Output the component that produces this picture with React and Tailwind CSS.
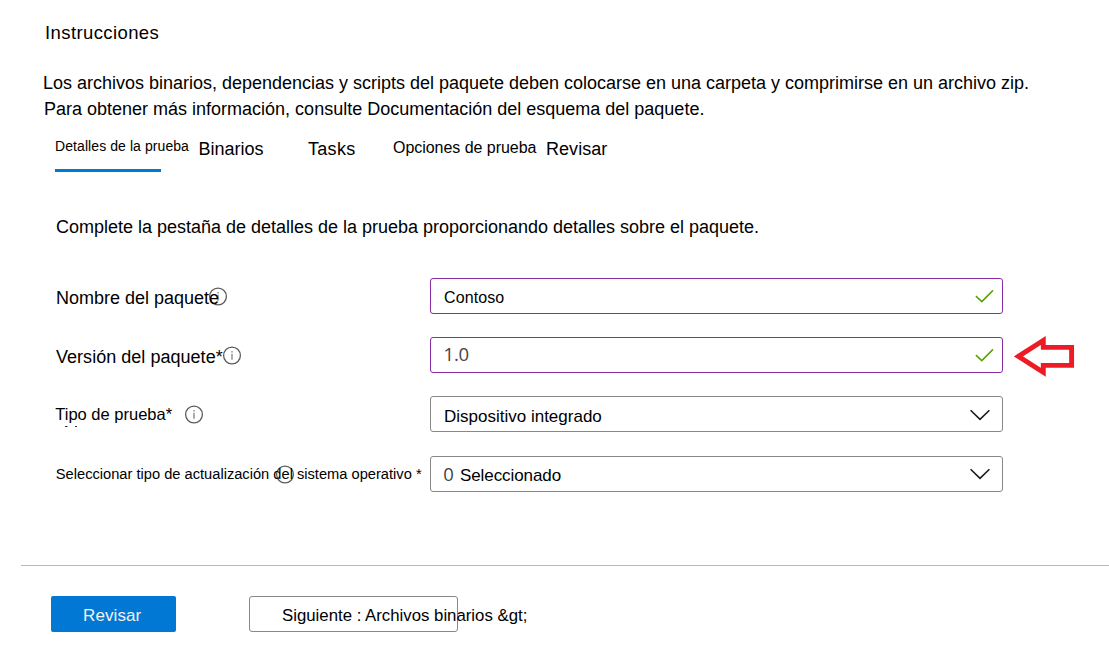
import React from "react";

function InfoIcon({ className = "", hollow = false }) {
  return (
    <svg className={`size-5 shrink-0 ${className}`} viewBox="0 0 20 20" fill="none">
      <circle cx="10" cy="9.5" r="8.4" stroke="#5c5c5c" strokeWidth="1.3" />
      {!hollow && <path d="M10 7.7V13.7M10 4.9V6.4" stroke="#8a8a8a" strokeWidth="1.4" />}
    </svg>
  );
}

function Check() {
  return (
    <svg className="h-5 w-5 shrink-0" viewBox="0 0 20 20" fill="none">
      <path d="M0.9 10.1L6.8 15.6L18 4.4" stroke="#57a300" strokeWidth="1.5" />
    </svg>
  );
}

function Chevron() {
  return (
    <svg className="h-5 w-5 shrink-0" viewBox="0 0 20 20" fill="none">
      <path d="M0.6 6.2L10 15.4L19.4 6.2" stroke="#1b1b1b" strokeWidth="1.6" />
    </svg>
  );
}

function ArrowLeft() {
  return (
    <svg className="ml-[10px] mt-[-3px] h-[44px] w-[62px] shrink-0" viewBox="0 0 62 44" fill="none">
      <path
        d="M5.4 22.4L30.3 6.5V13.4H58.6V31.4H30.3V38.3L5.4 22.4Z"
        stroke="#ed1c24"
        strokeWidth="4.9"
        strokeLinejoin="miter"
      />
    </svg>
  );
}

function Row({ label, children, after }) {
  return (
    <div className="flex h-9 items-start">
      <div className="relative h-9 w-[375px] shrink-0">{label}</div>
      {children}
      {after}
    </div>
  );
}

function Field({ border, icon, iconClass, children }) {
  return (
    <div className={`flex h-9 w-[573px] shrink-0 items-start justify-between rounded-[3px] border ${border}`}>
      <div className="flex items-start">{children}</div>
      <div className={iconClass}>{icon}</div>
    </div>
  );
}

export default function App() {
  return (
    <main className="h-[657px] w-[1109px] overflow-hidden whitespace-nowrap bg-white font-['Liberation_Sans',Arial,sans-serif] text-[18px] leading-5 text-black">
      <h1 className="pl-[45px] pt-[23px] text-[18.5px] tracking-[0.4px]">Instrucciones</h1>
      <div className="pt-[30px]">
        <p className="pl-[43px] tracking-[-0.005px]">
          Los archivos binarios, dependencias y scripts del paquete deben colocarse en una carpeta y comprimirse en un archivo zip.
        </p>
        <p className="pl-[44px] pt-[6px]">
          Para obtener más información, consulte Documentación del esquema del paquete.
        </p>
      </div>

      <nav className="mt-[20px] flex h-[33px] items-start pl-[55px]">
        <div className="flex h-[33px] w-[143.5px] flex-col justify-between">
          <span className="-mt-[3px] text-[14px] tracking-[0.08px]">Detalles de la prueba</span>
          <span className="h-[3px] w-[106px] bg-[#0078d4]" />
        </div>
        <span className="w-[109.5px]">Binarios</span>
        <span className="w-[85px] tracking-[0.3px]">Tasks</span>
        <span className="-mt-px w-[153px] text-[16px] tracking-[-0.04px]">Opciones de prueba</span>
        <span className="tracking-[0.05px]">Revisar</span>
      </nav>

      <p className="pl-[56px] pt-[45px] tracking-[-0.006px]">
        Complete la pestaña de detalles de la prueba proporcionando detalles sobre el paquete.
      </p>

      <form className="flex flex-col gap-[23px] pl-[55px] pt-[41px]">
        <Row
          label={
            <>
              <InfoIcon className="absolute left-[153px] top-[9px]" />
              <span className="relative ml-[1px] mt-[10px] inline-block">Nombre del paquete</span>
            </>
          }
        >
          <Field border="border-[#8a2da5]" icon={<Check />} iconClass="mt-[7px] mr-[7px]">
            <span className="ml-[13px] mt-[9px] text-[16px] tracking-[0.1px]">Contoso</span>
          </Field>
        </Row>
        <Row
          label={
            <>
              <InfoIcon className="absolute left-[167px] top-[9px]" />
              <span className="relative ml-[1px] mt-[10px] inline-block tracking-[0.03px]">Versión del paquete*</span>
            </>
          }
          after={<ArrowLeft />}
        >
          <Field border="border-[#8a2da5]" icon={<Check />} iconClass="mt-[7px] mr-[7px]">
            <span className="ml-[12.5px] mt-[6px] font-['Open_Sans'] text-[18.5px] tracking-[-0.2px] text-[#444]">1.0</span>
          </Field>
        </Row>
        <Row
          label={
            <>
              <InfoIcon className="absolute left-[129px] top-[9px]" />
              <span className="relative ml-[0.3px] mt-[8px] inline-block text-[16.5px]">Tipo de prueba*</span>
              <svg className="absolute left-[9px] top-[30px] h-[2px] w-[16px]" viewBox="0 0 16 2">
                <path d="M1 0.5H3.5M11 0.5H13" stroke="#333" strokeWidth="1" />
              </svg>
            </>
          }
        >
          <Field border="border-[#8a8886]" icon={<Chevron />} iconClass="mt-[7px] mr-[12px]">
            <span className="ml-[13px] mt-[10px] text-[17px]">Dispositivo integrado</span>
          </Field>
        </Row>
        <div className="mt-px">
          <Row
            label={
              <>
                <InfoIcon hollow className="absolute left-[220px] top-[9px]" />
                <span className="relative ml-[0.8px] mt-[8px] inline-block text-[14.67px]">
                  Seleccionar tipo de actualización del sistema operativo *
                </span>
              </>
            }
          >
            <Field border="border-[#8a8886]" icon={<Chevron />} iconClass="mt-[6px] mr-[12px]">
              <span className="ml-[12.2px] mt-[7px] w-[16.8px] font-['Open_Sans'] text-[18.5px] text-[#444]">0</span>
              <span className="mt-[9px] text-[17px] tracking-[-0.08px]">Seleccionado</span>
            </Field>
          </Row>
        </div>
      </form>

      <footer className="ml-[21px] mt-[73px] flex items-start border-t border-[#b8b8b8] pl-[30px] pt-[30px]">
        <button type="button" className="h-9 w-[125px] rounded-[2px] bg-[#0078d4] pl-[32px] pt-[3px] text-left text-[17px] tracking-[0.1px] text-[#f3f2f1]">
          Revisar
        </button>
        <button type="button" className="ml-[73px] h-9 w-[209px] rounded-[3px] border border-[#8a8886] pl-[32px] pt-[3px] text-left text-[16.8px]">
          Siguiente : Archivos binarios &amp;gt;
        </button>
      </footer>
    </main>
  );
}
